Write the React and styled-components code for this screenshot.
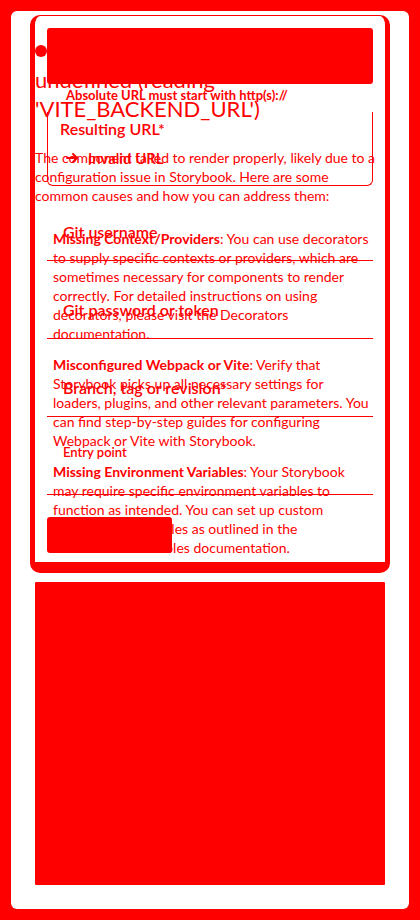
import React from "react";
import styled, { createGlobalStyle } from "styled-components";

const RED = "#ff0000";

const Global = createGlobalStyle`
  html, body { margin: 0; padding: 0; background: ${RED}; }
  body { font-family: Lato, "Open Sans", sans-serif; color: ${RED}; }
  * { box-sizing: border-box; }
`;

const Page = styled.div`
  margin: 11px;
  height: 898px;
  background: #fff;
  border-radius: 6px;
  padding: 4px 19px 0;
  display: flex;
  flex-direction: column;
`;

const Card = styled.section`
  position: relative;
  height: 558px;
  border-style: solid;
  border-color: ${RED};
  border-width: 1px 5px 11px;
  border-radius: 10px;
  padding: 0 12px;
  display: flex;
  flex-direction: column;
`;

const AlertBox = styled.div`
  margin-top: 12px;
  height: 56px;
  background: ${RED};
  border-radius: 3px;
`;

const Helper = styled.p`
  margin: 3px 0 0 19px;
  font-size: 13px;
  font-weight: 700;
  line-height: 16px;
`;

const FieldBox = styled.div`
  margin-top: 9px;
  border: 1px solid ${RED};
  border-top: none;
  border-radius: 0 0 6px 6px;
  padding: 7px 12px 17px;
`;

const BoxLabel = styled.div`
  font-size: 16px;
  font-weight: 600;
  line-height: 20px;
`;

const ErrorRow = styled.div`
  margin-top: 9px;
  padding-left: 6px;
  display: flex;
  align-items: center;
  gap: 8px;
  font-size: 15px;
  line-height: 20px;
  font-weight: 600;
`;

const Field = styled.div`
  margin-top: ${(p) => p.$gap}px;
  display: flex;
  flex-direction: column;
`;

const FieldLabel = styled.label`
  padding-left: 16px;
  font-size: ${(p) => (p.$small ? 13 : 16)}px;
  line-height: ${(p) => (p.$small ? 16 : 20)}px;
  font-weight: 600;
`;

const Underline = styled.div`
  height: ${(p) => p.$h}px;
  border-bottom: 1px solid ${RED};
`;

const SubmitButton = styled.button`
  margin-top: 22px;
  width: 125px;
  height: 36px;
  border: none;
  border-radius: 3px;
  background: ${RED};
  color: ${RED};
  font: inherit;
`;

const Overlay = styled.div`
  position: absolute;
  top: 20px;
  left: 0;
  right: 0;
`;

const Heading = styled.h1`
  margin: 0;
  font-size: 22px;
  line-height: 29px;
  font-weight: 400;
  white-space: nowrap;
`;

const Dot = styled.span`
  display: inline-block;
  width: 12px;
  height: 12px;
  border-radius: 50%;
  background: ${RED};
  vertical-align: middle;
  margin: 0 8px 4px 0;
`;

const Para = styled.p`
  margin: 25px 0 0;
  font-size: 14px;
  line-height: 19px;
  white-space: nowrap;
`;

const List = styled.ul`
  margin: 24px 0 0;
  padding-left: 18px;
  list-style: none;
`;

const Item = styled.li`
  font-size: 14px;
  line-height: 19px;
  white-space: nowrap;
  & + & { margin-top: 12px; }
  strong { font-weight: 700; }
`;

const Preview = styled.div`
  margin: 9px 5px 0;
  height: 303px;
  background: ${RED};
  border-radius: 1px;
`;

const WarnIcon = () => (
  <svg width="14" height="12" viewBox="0 0 14 12" fill="none" stroke={RED} strokeWidth="2">
    <path d="M1 6h10M7 2l4 4-4 4" strokeLinecap="round" strokeLinejoin="round" />
  </svg>
);

export default function App() {
  return (
    <>
      <Global />
      <Page>
        <Card>
          <AlertBox />
          <Helper>Absolute URL must start with http(s)://</Helper>
          <FieldBox>
            <BoxLabel>Resulting URL*</BoxLabel>
            <ErrorRow>
              <WarnIcon />
              <span>Invalid URL</span>
            </ErrorRow>
          </FieldBox>
          <Field $gap={36}>
            <FieldLabel>Git username</FieldLabel>
            <Underline $h={19} />
          </Field>
          <Field $gap={39}>
            <FieldLabel>Git password or token</FieldLabel>
            <Underline $h={19} />
          </Field>
          <Field $gap={39}>
            <FieldLabel>Branch, tag or revision*</FieldLabel>
            <Underline $h={19} />
          </Field>
          <Field $gap={27}>
            <FieldLabel $small>Entry point</FieldLabel>
            <Underline $h={35} />
          </Field>
          <SubmitButton>Save</SubmitButton>
          <Overlay>
            <Heading>
              <Dot />
              Cannot read properties of
              <br />
              undefined (reading
              <br />
              'VITE_BACKEND_URL')
            </Heading>
            <Para>
              The component failed to render properly, likely due to a
              <br />
              configuration issue in Storybook. Here are some
              <br />
              common causes and how you can address them:
            </Para>
            <List>
              <Item>
                <strong>Missing Context/Providers</strong>: You can use decorators
                <br />
                to supply specific contexts or providers, which are
                <br />
                sometimes necessary for components to render
                <br />
                correctly. For detailed instructions on using
                <br />
                decorators, please visit the Decorators
                <br />
                documentation.
              </Item>
              <Item>
                <strong>Misconfigured Webpack or Vite</strong>: Verify that
                <br />
                Storybook picks up all necessary settings for
                <br />
                loaders, plugins, and other relevant parameters. You
                <br />
                can find step-by-step guides for configuring
                <br />
                Webpack or Vite with Storybook.
              </Item>
              <Item>
                <strong>Missing Environment Variables</strong>: Your Storybook
                <br />
                may require specific environment variables to
                <br />
                function as intended. You can set up custom
                <br />
                environment variables as outlined in the
                <br />
                Environment Variables documentation.
              </Item>
            </List>
          </Overlay>
        </Card>
        <Preview />
      </Page>
    </>
  );
}
